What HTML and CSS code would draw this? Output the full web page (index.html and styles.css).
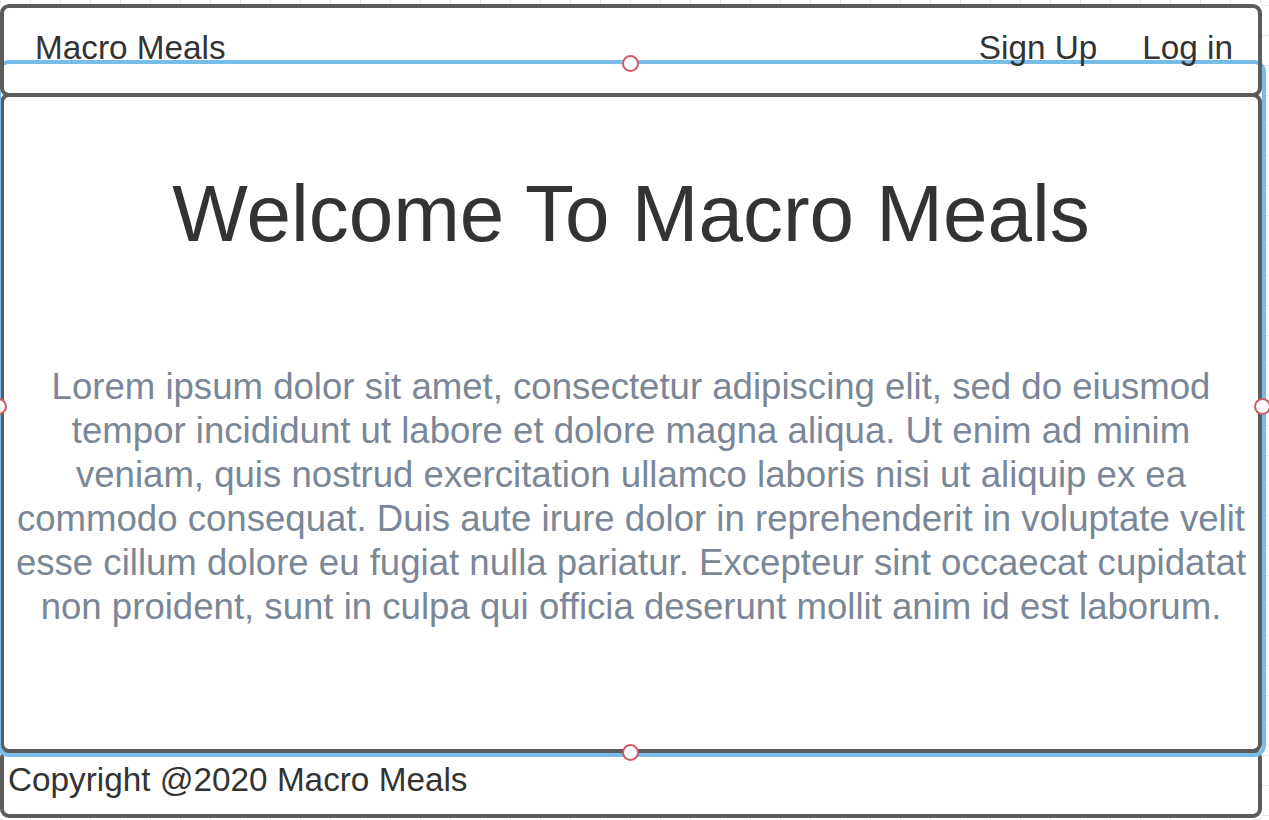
FILE: index.html
```html
<!DOCTYPE html>
<html lang="en">
<head>
<meta charset="utf-8">
<title>Macro Meals</title>
<link rel="stylesheet" href="styles.css">
</head>
<body>
<div class="canvas">
  <div class="frame">
    <header class="box header">
      <span class="brand">Macro Meals</span>
      <nav class="nav">
        <span class="nav-link">Sign Up</span>
        <span class="nav-link">Log in</span>
      </nav>
    </header>
    <main class="box main">
      <h1 class="title">Welcome To Macro Meals</h1>
      <p class="lead">Lorem ipsum dolor sit amet, consectetur adipiscing elit, sed do eiusmod tempor incididunt ut labore et dolore magna aliqua. Ut enim ad minim veniam, quis nostrud exercitation ullamco laboris nisi ut aliquip ex ea commodo consequat. Duis aute irure dolor in reprehenderit in voluptate velit esse cillum dolore eu fugiat nulla pariatur. Excepteur sint occaecat cupidatat non proident, sunt in culpa qui officia deserunt mollit anim id est laborum.</p>
    </main>
    <footer class="box footer">
      <span class="copyright">Copyright @2020 Macro Meals</span>
    </footer>
  </div>
  <div class="selection"></div>
  <span class="handle handle-top"></span>
  <span class="handle handle-bottom"></span>
  <span class="handle handle-left"></span>
  <span class="handle handle-right"></span>
</div>
</body>
</html>
```
FILE: styles.css
```css
html, body {
  margin: 0;
  padding: 0;
}

body {
  width: 1269px;
  height: 820px;
  overflow: hidden;
  background-color: #ffffff;
  background-image:
    linear-gradient(to right, #e6e6e6 1px, transparent 1px),
    linear-gradient(to bottom, #e6e6e6 1px, transparent 1px);
  background-size: 30px 30px;
  background-position: 0 5px;
  font-family: "Liberation Sans", Arial, sans-serif;
  color: #333333;
}

.canvas {
  position: relative;
  width: 1262px;
  padding-top: 4px;
}

.frame {
  display: flex;
  flex-direction: column;
  background: #ffffff;
}

.box {
  box-sizing: border-box;
  border: 4px solid #5c5c5c;
  border-radius: 9px;
}

.header {
  position: relative;
  z-index: 2;
  height: 93px;
  display: flex;
  justify-content: space-between;
  align-items: flex-start;
  padding: 21px 25px 0 31px;
  font-size: 33.3px;
  line-height: normal;
}

.nav {
  display: flex;
  gap: 45px;
}

.main {
  height: 660px;
  margin-top: -4px;
  display: flex;
  flex-direction: column;
  align-items: center;
}

.title {
  position: relative;
  z-index: 2;
  margin: 71px 0 0;
  font-size: 80px;
  font-weight: normal;
  line-height: normal;
  color: #333333;
  white-space: nowrap;
}

.lead {
  width: 1240px;
  margin: 105px 0 0;
  font-size: 36.6px;
  line-height: 44px;
  text-align: center;
  color: #7b8696;
}

.footer {
  height: 69px;
  margin-top: -4px;
  padding: 8px 0 0 4px;
  font-size: 33.3px;
  line-height: normal;
}

.selection {
  position: absolute;
  z-index: 1;
  left: -3px;
  top: 60px;
  width: 1269px;
  height: 697px;
  box-sizing: border-box;
  border: 4px solid #78bde8;
  border-radius: 12px;
  pointer-events: none;
}

.header .brand,
.header .nav {
  position: relative;
  z-index: 3;
}

.handle {
  position: absolute;
  z-index: 4;
  width: 17px;
  height: 17px;
  box-sizing: border-box;
  border: 2px solid #cf5d65;
  border-radius: 50%;
  background: #ffffff;
}

.handle-top {
  left: 621.5px;
  top: 54.5px;
}

.handle-bottom {
  left: 621.5px;
  top: 744px;
}

.handle-left {
  left: -10px;
  top: 397.5px;
}

.handle-right {
  left: 1253.5px;
  top: 397.5px;
}
```
